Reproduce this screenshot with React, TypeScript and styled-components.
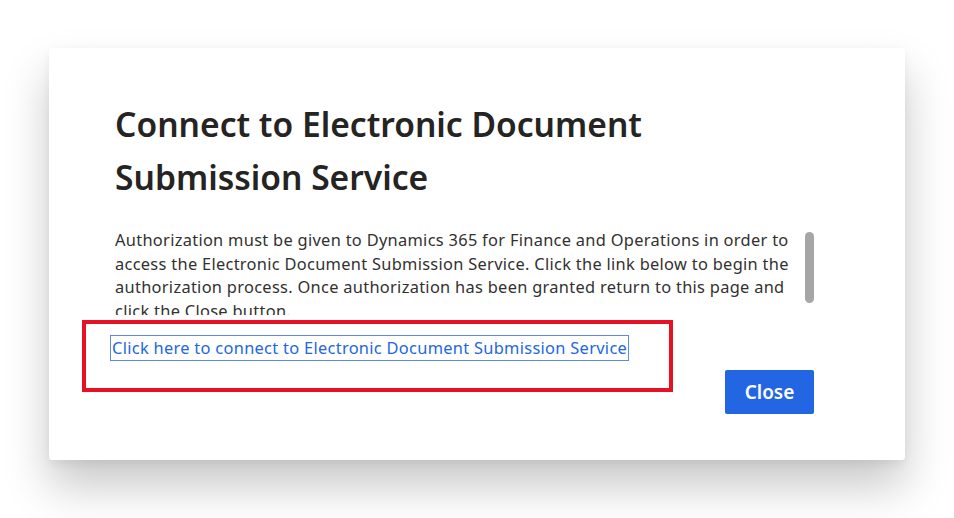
import React from "react";
import styled, { createGlobalStyle } from "styled-components";

const Global = createGlobalStyle`
  html, body { margin: 0; padding: 0; background: #ffffff; }
  body { font-family: "Noto Sans", "Open Sans", sans-serif; }
`;

const Page = styled.div`
  width: 954px;
  height: 518px;
  box-sizing: border-box;
  padding: 48px 0 0 49px;
  overflow: hidden;
`;

const Dialog = styled.div`
  position: relative;
  width: 856px;
  height: 412px;
  box-sizing: border-box;
  background: #ffffff;
  border-radius: 3px;
  box-shadow: 0 26px 46px rgba(0, 0, 0, 0.22), 0 4px 10px rgba(0, 0, 0, 0.06);
  padding: 50px 91px 0 66px;
  display: flex;
  flex-direction: column;
`;

const Title = styled.h1`
  margin: 0;
  max-width: 600px;
  font-family: "Noto Sans", sans-serif;
  font-weight: 600;
  font-size: 33.6px;
  line-height: 53px;
  color: #252423;
`;

const BodyRow = styled.div`
  display: flex;
  gap: 16px;
  margin-top: 24px;
`;

const BodyText = styled.p`
  flex: 1;
  margin: 0;
  height: 87px;
  overflow: hidden;
  font-family: "Noto Sans", sans-serif;
  font-size: 16.4px;
  letter-spacing: 0.3px;
  line-height: 23.6px;
  color: #323130;
`;

const ScrollTrack = styled.div`
  width: 9px;
  padding-top: 4px;
`;

const ScrollThumb = styled.div`
  width: 9px;
  height: 71px;
  border-radius: 5px;
  background: #a6a6a6;
`;

const LinkRow = styled.div`
  margin-top: 21px;
  margin-left: -4px;
  display: flex;
`;

const Link = styled.a`
  font-family: "Noto Sans", sans-serif;
  font-size: 16.4px;
  letter-spacing: 0.3px;
  line-height: 24px;
  color: #2266e3;
  text-decoration: none;
  outline: 1px solid #5b8ae8;
  padding: 0 1px;
  cursor: pointer;
`;

const Footer = styled.div`
  display: flex;
  justify-content: flex-end;
  margin-top: 10px;
`;

const CloseButton = styled.button`
  width: 89px;
  height: 44px;
  border: none;
  border-radius: 2px;
  background: #2266e3;
  color: #ffffff;
  font-family: "Noto Sans", sans-serif;
  font-weight: 600;
  font-size: 19px;
  cursor: pointer;
`;

const Highlight = styled.div`
  position: absolute;
  left: 33px;
  top: 272px;
  width: 591px;
  height: 72px;
  box-sizing: border-box;
  border: 4px solid #e81123;
  pointer-events: none;
`;

export default function App() {
  return (
    <>
      <Global />
      <Page>
        <Dialog>
          <Title>Connect to Electronic Document Submission Service</Title>
          <BodyRow>
            <BodyText>
              Authorization must be given to Dynamics 365 for Finance and Operations in order to
              access the Electronic Document Submission Service. Click the link below to begin the
              authorization process. Once authorization has been granted return to this page and
              click the Close button.
            </BodyText>
            <ScrollTrack>
              <ScrollThumb />
            </ScrollTrack>
          </BodyRow>
          <LinkRow>
            <Link>Click here to connect to Electronic Document Submission Service</Link>
          </LinkRow>
          <Footer>
            <CloseButton>Close</CloseButton>
          </Footer>
          <Highlight />
        </Dialog>
      </Page>
    </>
  );
}
